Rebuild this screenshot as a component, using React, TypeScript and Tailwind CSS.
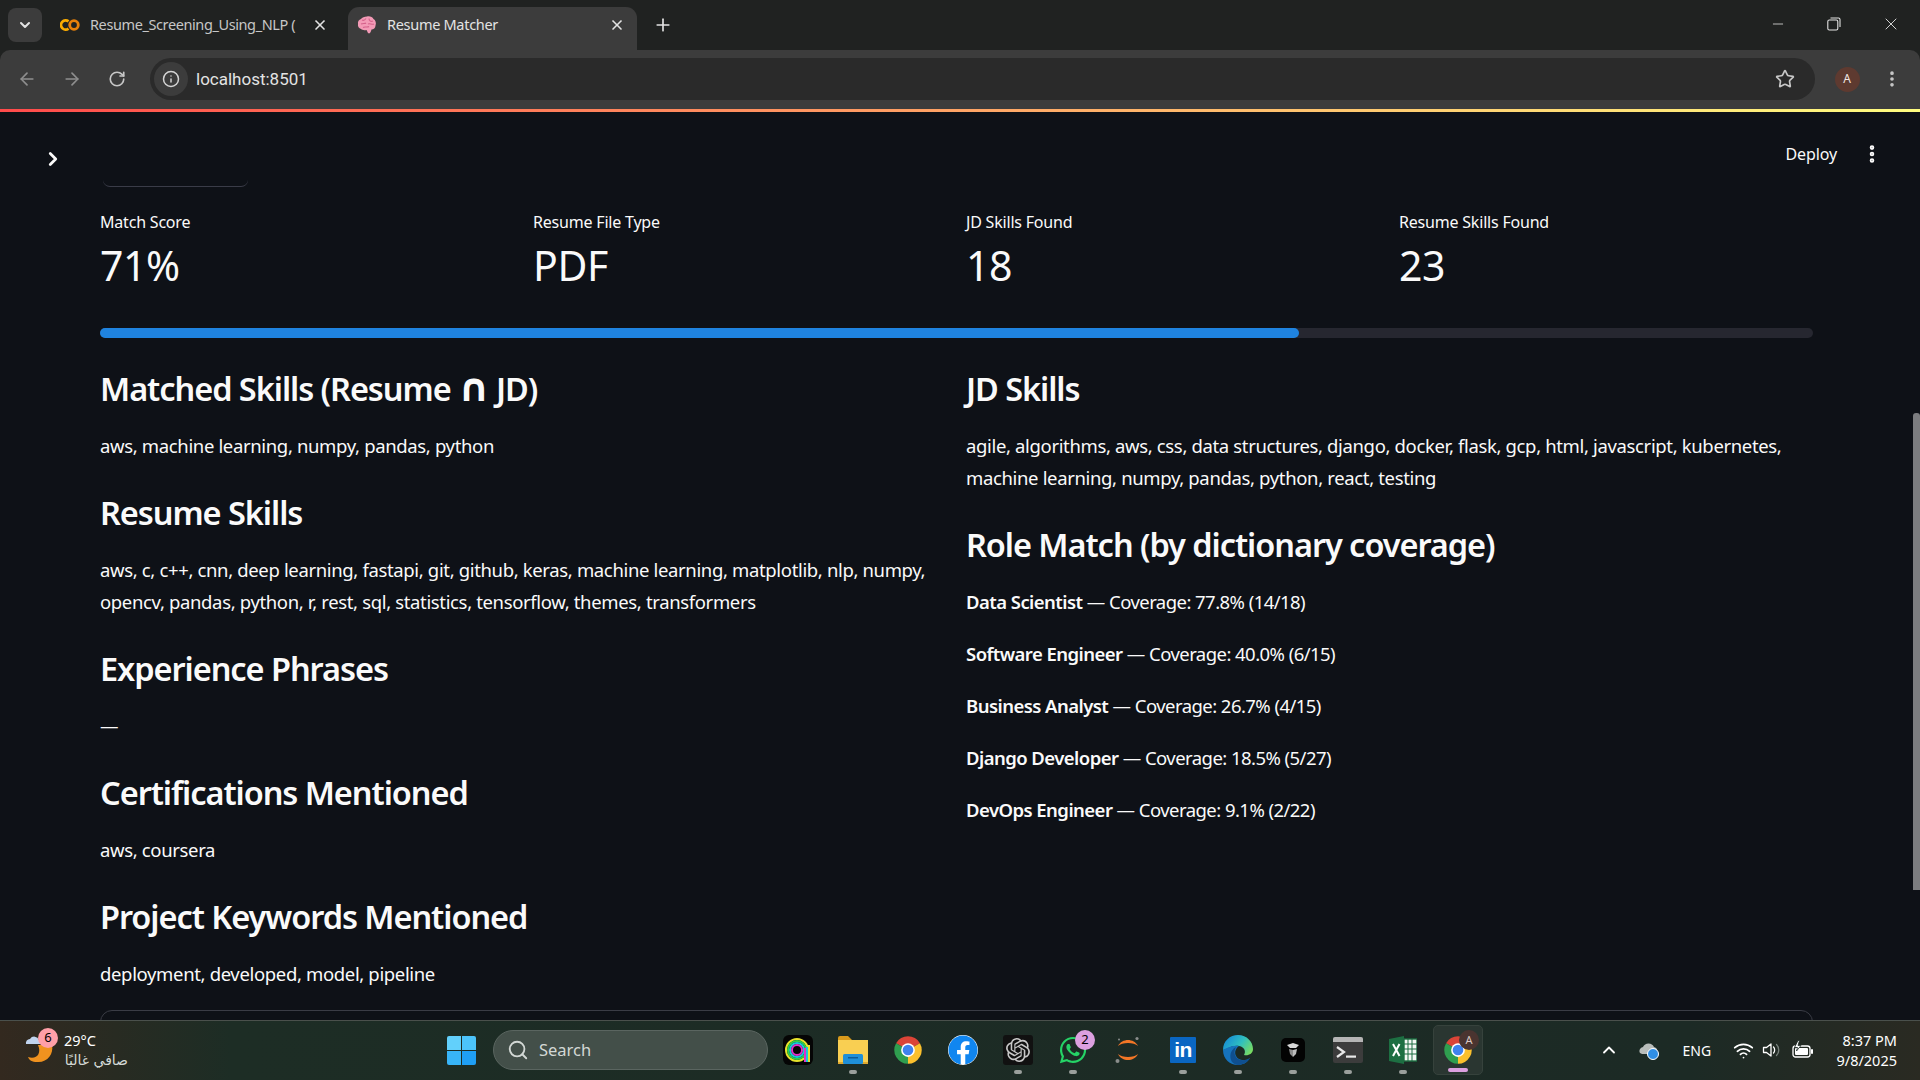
import React from 'react';
import { ArrowLeft, ArrowRight, ChevronDown, ChevronRight, ChevronUp, EllipsisVertical, Info, Minus, Plus, RotateCw, Search, Star, Wifi, X } from 'lucide-react';
import { FaFacebook, FaWhatsapp } from 'react-icons/fa';
import { SiOpenai } from 'react-icons/si';

const ROLES = [
  ['Data Scientist', 'Coverage: 77.8% (14/18)'],
  ['Software Engineer', 'Coverage: 40.0% (6/15)'],
  ['Business Analyst', 'Coverage: 26.7% (4/15)'],
  ['Django Developer', 'Coverage: 18.5% (5/27)'],
  ['DevOps Engineer', 'Coverage: 9.1% (2/22)'],
];

const METRICS = [
  ['Match Score', '71%'],
  ['Resume File Type', 'PDF'],
  ['JD Skills Found', '18'],
  ['Resume Skills Found', '23'],
];

const ChromeLogo = ({ size = 30 }: { size?: number }) => (
  <svg width={size} height={size} viewBox="0 0 48 48">
    <path d="M24 24 L4.95 13 A22 22 0 0 1 43.05 13 Z" fill="#db4437" />
    <path d="M24 24 L43.05 13 A22 22 0 0 1 24 46 Z" fill="#fbc02d" />
    <path d="M24 24 L24 46 A22 22 0 0 1 4.95 13 Z" fill="#2f9e4f" />
    <circle cx="24" cy="24" r="11" fill="#fff" />
    <circle cx="24" cy="24" r="8.5" fill="#3f82ee" />
  </svg>
);

const Folder = () => (
  <svg width="32" height="30" viewBox="0 0 32 30">
    <path d="M1 3 a2 2 0 0 1 2-2 h8 l4 4 h-14 z" fill="#d99a1c" />
    <rect x="1" y="5" width="30" height="24" fill="#f9cf52" />
    <rect x="1" y="27" width="30" height="2" fill="#e0a92e" />
    <rect x="6" y="19" width="20" height="10" rx="1.5" fill="#1f8fd8" />
    <rect x="11" y="22" width="10" height="1.5" fill="#0c5c99" />
  </svg>
);

const RingsLogo = () => (
  <svg width="30" height="30" viewBox="0 0 30 30">
    <rect width="30" height="30" rx="6" fill="#050505" />
    <circle cx="14" cy="15" r="11" fill="none" stroke="#e6e22c" strokeWidth="2" />
    <circle cx="14" cy="15" r="9" fill="none" stroke="#2fd24a" strokeWidth="2" />
    <circle cx="14" cy="15" r="7" fill="none" stroke="#18c9d6" strokeWidth="2" />
    <circle cx="14" cy="15" r="5" fill="none" stroke="#e12fc9" strokeWidth="2" />
    <rect x="21" y="13" width="2" height="14" fill="#e12fc9" />
    <rect x="23" y="12" width="2" height="15" fill="#18c9d6" />
    <rect x="25" y="10" width="2" height="17" fill="#e6e22c" />
  </svg>
);

const Jupyter = () => (
  <svg width="30" height="30" viewBox="0 0 30 30">
    <path d="M5 11 C9 3 21 3 25 11 C21 7 9 7 5 11 Z" fill="#f37626" />
    <path d="M5 19 C9 27 21 27 25 19 C21 23 9 23 5 19 Z" fill="#f37626" />
    <circle cx="24" cy="3.5" r="1.6" fill="#8a8d8c" />
    <circle cx="4.5" cy="26" r="2" fill="#8a8d8c" />
    <circle cx="6" cy="4.5" r="1" fill="#8a8d8c" />
  </svg>
);

const Edge = () => (
  <svg width="30" height="30" viewBox="0 0 30 30">
    <defs>
      <linearGradient id="edgeTop" x1="0" y1="0.2" x2="1" y2="0.7">
        <stop offset="0" stopColor="#1488d8" />
        <stop offset="0.55" stopColor="#2fbfc0" />
        <stop offset="1" stopColor="#78dc62" />
      </linearGradient>
    </defs>
    <path d="M0 15 C0 6 7 0 15 0 C24 0 30 7 30 14 C30 19 25 21 21 20 C23 17 22 12 16 11 C9 10 5 14 0 15 Z" fill="url(#edgeTop)" />
    <path d="M0 15 C5 12 11 10 16 11 C13 13 11 17 13 21 C15 25 21 27 27 23 C24 28 19 30 15 30 C7 30 0 24 0 15 Z" fill="#1673bd" />
    <path d="M9 27 C6 22 7 15 13 12 C11 16 11 19 13 22 C15 25 21 27 27 23 C24 28 19 30 15 30 C13 30 11 29 9 27 Z" fill="#0f4f8f" />
  </svg>
);

const CubeApp = () => (
  <svg width="24" height="24" viewBox="0 0 24 24">
    <rect width="24" height="24" rx="5" fill="#030303" />
    <path d="M6 7 L12 5 L18 7 L15 10 L9 10 Z" fill="#d8d8d8" />
    <path d="M8 11 L12 12 L12 19 L9 16 Z" fill="#8c8c8c" />
    <path d="M16 11 L12 12 L12 19 L15 16 Z" fill="#bcbcbc" />
  </svg>
);

const Terminal = () => (
  <svg width="30" height="26" viewBox="0 0 30 26">
    <rect width="30" height="26" rx="2" fill="#3c3c3c" />
    <path d="M2 0 h26 a2 2 0 0 1 2 2 v3 h-30 v-3 a2 2 0 0 1 2-2 z" fill="#b5b5b5" />
    <path d="M4 10 L11 15 L4 20" fill="none" stroke="#e8e8e8" strokeWidth="2.2" />
    <rect x="13" y="18.5" width="10" height="2.2" fill="#e8e8e8" />
  </svg>
);

const Excel = () => (
  <svg width="28" height="28" viewBox="0 0 28 28">
    <path d="M0 3 L15 0 V28 L0 25 Z" fill="#1d6f42" />
    <rect x="15" y="3" width="13" height="22" fill="#f4f8f4" stroke="#1d6f42" strokeWidth="1.4" />
    <path d="M19 3 V25 M23 3 V25 M15 8 H28 M15 13 H28 M15 18 H28" stroke="#1d6f42" strokeWidth="1" />
    <path d="M4 8 L10.5 20 M10.5 8 L4 20" stroke="#fff" strokeWidth="2" />
  </svg>
);

const ColabLogo = () => (
  <svg width="20" height="14" viewBox="0 0 20 14">
    <path d="M8.5 3.4 A4.6 4.6 0 1 0 8.5 10.6" fill="none" stroke="#f9ab00" strokeWidth="2.8" />
    <circle cx="14" cy="7" r="4.3" fill="none" stroke="#e8810a" strokeWidth="2.8" />
  </svg>
);

const BrainIcon = () => (
  <svg width="20" height="20" viewBox="0 0 20 20">
    <path d="M10 1.5 C13 1 15.5 2 16.5 4 C18.5 5 19.5 8 18.5 10.5 C18.5 13 16.5 14.5 14.5 14.5 C14 16 13.5 18.5 12 18.5 C10.5 18.5 10.5 16 9.5 15 C7 15.5 5 15 4 14 C2 13.5 0.5 11.5 1 9 C0.5 6.5 2 4.5 4 4 C5 2.5 7.5 1.5 10 1.5 Z" fill="#f39ab6" />
    <path d="M5 5 C7 6 8 5 9 3.5 M4 9 C6 8 8 9 9 8 M12 3.5 C12 6 14 7 16 6 M11 9 C13 8 15 10 17 9 M6 12.5 C8 11 10 13 12 11.5" fill="none" stroke="#d4618a" strokeWidth="1.1" />
  </svg>
);

const VolumeIcon = () => (
  <svg width="20" height="20" viewBox="0 0 20 20" fill="none" strokeWidth="1.3" strokeLinejoin="round" strokeLinecap="round">
    <path d="M1.5 7.5 H4.5 L9 4 V16 L4.5 12.5 H1.5 Z" stroke="#fff" />
    <path d="M11.5 7 C13 8.5 13 11.5 11.5 13" stroke="#fff" />
    <path d="M14.5 4.5 C17.5 7.5 17.5 12.5 14.5 15.5" stroke="#77807b" />
  </svg>
);

const BatteryIcon = () => (
  <svg width="22" height="20" viewBox="0 0 22 20">
    <rect x="1" y="6" width="17" height="11" rx="2.5" fill="none" stroke="#fff" strokeWidth="1.3" />
    <rect x="3" y="8" width="13" height="7" rx="1" fill="#fff" />
    <rect x="19" y="9" width="2" height="5" rx="1" fill="#fff" />
    <path d="M6 0.5 L2.5 7.5 H5.5 L4.5 11 L9 5.5 H6 L7.5 0.5 Z" fill="#fff" stroke="#1c2a25" strokeWidth="0.8" />
  </svg>
);

const Dot = ({ active }: { active?: boolean }) =>
  active ? <span className="block h-[4px] w-[20px] rounded-full bg-[#dca0e0]" /> : <span className="block h-[4px] w-[8px] rounded-full bg-[#9a9f9c]" />;

const TaskIcon = ({ dot, children }: { dot?: boolean; children: React.ReactNode }) => (
  <div className="flex h-[59px] w-[55px] flex-col items-center">
    <div className="flex h-[48px] w-full items-center justify-center pt-[10px]">{children}</div>
    <div className="pt-[1px]">{dot && <Dot />}</div>
  </div>
);

const Section = ({ title, children }: { title: React.ReactNode; children: React.ReactNode }) => (
  <section className="mb-[30px]">
    <h3 className="mb-[20px] whitespace-nowrap text-[32.5px] font-semibold leading-[42px] tracking-[-1.05px]">{title}</h3>
    <p className="whitespace-nowrap text-[18.5px] leading-[32px] tracking-[-0.35px]">{children}</p>
  </section>
);

const TabStrip = () => (
  <div className="flex h-[50px] bg-[#202221] pl-[8px] text-[#e3e3e3]">
    <div className="mt-[8px] flex h-[34px] w-[34px] items-center justify-center rounded-lg bg-[#3c3c3c]">
      <ChevronDown size={16} strokeWidth={3} />
    </div>
    <div className="flex w-[306px] items-center pb-[1px] pl-[18px] text-[14.5px] tracking-[-0.4px] text-[#c7c7c7]">
      <ColabLogo />
      <span className="ml-[10px] w-[209px] whitespace-nowrap">Resume_Screening_Using_NLP (</span>
      <X size={16} strokeWidth={2.5} className="ml-[13px] text-[#e3e3e3]" />
    </div>
    <div className="mt-[7px] flex h-[43px] w-[289px] items-center rounded-t-[11px] bg-[#3c3c3c] pb-[7px] pl-[9px] text-[14.5px] tracking-[-0.3px]">
      <BrainIcon />
      <span className="ml-[10px] w-[222px] whitespace-nowrap">Resume Matcher</span>
      <X size={16} strokeWidth={2.5} />
    </div>
    <div className="flex w-[52px] items-center justify-center pb-[1px]">
      <Plus size={20} strokeWidth={2} />
    </div>
    <div className="ml-auto flex h-[48px] items-center">
      <div className="flex w-[56px] justify-center"><Minus size={16} strokeWidth={1.2} /></div>
      <div className="flex w-[56px] justify-center">
        <svg width="14" height="14" viewBox="0 0 14 14" fill="none" stroke="#e3e3e3" strokeWidth="1.1">
          <rect x="0.8" y="3" width="10" height="10" rx="1.5" />
          <path d="M3.5 1 H11.5 a1.5 1.5 0 0 1 1.5 1.5 V10" />
        </svg>
      </div>
      <div className="flex w-[58px] justify-center"><X size={20} strokeWidth={1.1} /></div>
    </div>
  </div>
);

const Toolbar = () => (
  <div className="bg-[#202221]">
    <div className="flex h-[59px] items-center rounded-t-[10px] bg-[#3c3c3c] pb-[1px] pl-[4.5px]">
      <div className="flex w-[45px] justify-center text-[#8e8e8e]"><ArrowLeft size={20} /></div>
      <div className="flex w-[45px] justify-center text-[#8e8e8e]"><ArrowRight size={20} /></div>
      <div className="flex w-[45px] justify-center text-[#c7c7c7]"><RotateCw size={18} strokeWidth={2.2} /></div>
      <div className="ml-[10.5px] flex h-[42px] w-[1665px] items-center rounded-full bg-[#2a2a2a] pl-[4px] pr-[20px]">
        <div className="flex h-[34px] w-[34px] items-center justify-center rounded-full bg-[#3c3c3c] text-[#d5d5d5]"><Info size={18} /></div>
        <span className="ml-[8px] pt-[1px] text-[17px] text-[#e3e3e3] [font-family:Roboto,sans-serif]">localhost:8501</span>
        <Star size={20} strokeWidth={2} className="ml-auto text-[#c7c7c7]" />
      </div>
      <div className="ml-[19.5px] flex h-[25px] w-[25px] items-center justify-center rounded-full bg-[#5e3a30] text-[12px] text-[#f2e6e2]">A</div>
      <EllipsisVertical size={20} strokeWidth={2.4} className="ml-[22px] text-[#c7c7c7]" />
    </div>
    <div className="h-[3px] bg-[linear-gradient(90deg,#ff4b4b,#fffd80)]" />
  </div>
);

const Taskbar = () => (
  <div className="flex h-[60px] shrink-0 border-t border-[#4a504c] bg-[linear-gradient(90deg,#33291f_0%,#1d2d25_12%,#1c2a25_88%,#2a2a22_100%)] text-white [font-family:'Noto_Sans',sans-serif]">
    <div className="relative w-[64px] shrink-0">
      <svg width="34" height="34" viewBox="0 0 34 34" className="absolute left-[22px] top-[11px]">
        <path d="M16 13 C20 13 30 13 30 13 C32 22 25 31 15 30 C10 30 7 28 6 25 C14 28 20 22 16 13 Z" fill="#f0921f" />
        <path d="M4 12 a4 4 0 0 1 4-5 a5 5 0 0 1 9 1 a3 3 0 0 1 2 4 z" fill="#c0d4ee" />
      </svg>
      <span className="absolute left-[38px] top-[7px] flex h-[20px] w-[20px] items-center justify-center rounded-full bg-[#ff9fa8] text-[13px] text-black">6</span>
    </div>
    <div className="flex w-[383px] shrink-0 flex-col pt-[9px] text-[14.5px] leading-[20px]">
      <span>29°C</span>
      <span className="w-[64px] whitespace-nowrap text-[14px] text-[#d5dad7] [font-family:'DejaVu_Sans',sans-serif]" dir="rtl">صافي غالبًا</span>
    </div>
    <div className="mt-[15px] grid h-[29px] w-[29px] shrink-0 grid-cols-2 gap-[1px]">
      <span className="rounded-tl-[2px] bg-[#62d0fb]" />
      <span className="rounded-tr-[2px] bg-[#4cc4fb]" />
      <span className="rounded-bl-[2px] bg-[#38b5f8]" />
      <span className="rounded-br-[2px] bg-[#1f9ff5]" />
    </div>
    <div className="ml-[17px] mt-[9px] flex h-[40px] w-[275px] shrink-0 items-center rounded-full border border-[#5a6560] bg-[#434f49] pl-[13px] text-[16.5px] text-[#d3d8d5]">
      <Search size={22} strokeWidth={2} />
      <span className="ml-[10px]">Search</span>
    </div>
    <div className="ml-[2.5px] flex shrink-0">
      <TaskIcon><RingsLogo /></TaskIcon>
      <TaskIcon dot><Folder /></TaskIcon>
      <TaskIcon><ChromeLogo /></TaskIcon>
      <TaskIcon><FaFacebook size={30} className="rounded-full bg-white text-[#1086f0]" /></TaskIcon>
      <TaskIcon dot>
        <div className="flex h-[30px] w-[30px] items-center justify-center rounded-[3px] bg-[#111] text-[#c8c8c8]"><SiOpenai size={24} /></div>
      </TaskIcon>
      <TaskIcon dot>
        <div className="relative">
          <FaWhatsapp size={30} className="text-[#25d366]" />
          <span className="absolute right-[-7px] top-[-5px] flex h-[20px] w-[20px] items-center justify-center rounded-full bg-[#dca0e0] text-[13px] text-black">2</span>
        </div>
      </TaskIcon>
      <TaskIcon><Jupyter /></TaskIcon>
      <TaskIcon dot>
        <div className="flex h-[26px] w-[26px] items-center justify-center rounded-[1px] bg-[#0a66c2] pb-[1px] text-[21px] font-bold leading-none tracking-[-0.5px] text-white [font-family:'Liberation_Sans',sans-serif]">in</div>
      </TaskIcon>
      <TaskIcon dot><Edge /></TaskIcon>
      <TaskIcon dot><CubeApp /></TaskIcon>
      <TaskIcon dot><Terminal /></TaskIcon>
      <TaskIcon dot><Excel /></TaskIcon>
      <div className="ml-[2.5px] mt-[4px] flex h-[50px] w-[50px] flex-col items-center rounded-[5px] border border-[#36423c] bg-[#2a3631]">
        <div className="relative mt-[9px]">
          <ChromeLogo />
          <span className="absolute right-[-6px] top-[-5px] flex h-[20px] w-[20px] items-center justify-center rounded-full bg-[#4a3430] text-[11px] text-[#d8c8c4]">A</span>
        </div>
        <div className="mt-[3px]"><Dot active /></div>
      </div>
    </div>
    <div className="ml-[116px] flex shrink-0 items-center pb-[1px]">
      <ChevronUp size={20} strokeWidth={2.2} />
      <svg width="22" height="20" viewBox="0 0 22 20" className="ml-[18.5px]">
        <path d="M2 13 a4 4 0 0 1 3-6 a6 6 0 0 1 11 0 a4 4 0 0 1 2 7 h-14 z" fill="#b9bdbb" />
        <circle cx="15" cy="14" r="5.5" fill="#2f8fe6" stroke="#fff" strokeWidth="1" />
      </svg>
      <span className="ml-[23px] w-[29px] whitespace-nowrap text-[14px]">ENG</span>
      <Wifi size={21} strokeWidth={2} className="ml-[21px]" />
      <div className="ml-[8.5px]"><VolumeIcon /></div>
      <div className="ml-[10px]"><BatteryIcon /></div>
    </div>
    <div className="ml-auto flex flex-col items-end pr-[23px] pt-[9px] text-[14.5px] leading-[20px]">
      <span>8:37 PM</span>
      <span>9/8/2025</span>
    </div>
  </div>
);

const Main = () => (
  <main className="relative min-h-0 flex-1 overflow-hidden bg-[#0e1117] pl-[100px] pr-[107px] text-[#fafafa] [font-family:'Noto_Sans',sans-serif]">
    <header className="absolute inset-x-0 top-0 flex h-[74px] items-start">
      <ChevronRight size={22} strokeWidth={3} className="ml-[42px] mt-[36px]" />
      <span className="ml-auto mt-[29px] text-[16px] leading-[26px] tracking-[-0.1px]">Deploy</span>
      <EllipsisVertical size={22} strokeWidth={3} className="ml-[24px] mr-[37px] mt-[31px]" />
    </header>

    <div className="ml-[3px] mt-[68px] h-[7px] w-[145px] rounded-b-lg border-b border-[#3a3c48]" />

    <div className="mt-[23px] grid grid-cols-4 gap-x-[19px]">
      {METRICS.map(([label, value]) => (
        <div key={label}>
          <div className="text-[16px] leading-[24px] tracking-[-0.2px]">{label}</div>
          <div className="mt-[1px] text-[41px] leading-[60px] tracking-[-0.4px]">{value}</div>
        </div>
      ))}
    </div>

    <div className="mt-[33px] h-[10px] rounded-full bg-[#262730]">
      <div className="h-full w-[70%] rounded-full bg-[#1f83df]" />
    </div>

    <div className="mt-[30px] grid grid-cols-2 gap-x-[19px]">
      <div>
        <Section title={<>Matched Skills (Resume <span className="text-[39px] font-bold leading-none [font-family:'DejaVu_Sans',sans-serif]">∩</span> JD)</>}>
          aws, machine learning, numpy, pandas, python
        </Section>
        <Section title="Resume Skills">
          aws, c, c++, cnn, deep learning, fastapi, git, github, keras, machine learning, matplotlib, nlp, numpy,
          <br />
          opencv, pandas, python, r, rest, sql, statistics, tensorflow, themes, transformers
        </Section>
        <Section title="Experience Phrases">—</Section>
        <Section title="Certifications Mentioned">aws, coursera</Section>
        <Section title="Project Keywords Mentioned">deployment, developed, model, pipeline</Section>
      </div>
      <div>
        <Section title="JD Skills">
          agile, algorithms, aws, css, data structures, django, docker, flask, gcp, html, javascript, kubernetes,
          <br />
          machine learning, numpy, pandas, python, react, testing
        </Section>
        <h3 className="mb-[20px] whitespace-nowrap text-[32.5px] font-semibold leading-[42px] tracking-[-1.05px]">Role Match (by dictionary coverage)</h3>
        {ROLES.map(([role, coverage]) => (
          <p key={role} className="mb-[20px] whitespace-nowrap text-[18.5px] leading-[32px] tracking-[-0.55px]">
            <strong className="font-semibold">{role}</strong> — {coverage}
          </p>
        ))}
      </div>
    </div>

    <div className="-mt-[10px] h-[40px] rounded-t-xl border border-[#3a3c45]" />

    <div className="absolute right-0 top-[301px] h-[477px] w-[7px] rounded-t-[3px] bg-[#7c7d80]" />
  </main>
);

export default function App() {
  return (
    <div className="flex h-screen w-[1920px] flex-col overflow-hidden bg-[#0e1117] [font-family:'Noto_Sans',sans-serif]">
      <TabStrip />
      <Toolbar />
      <Main />
      <Taskbar />
    </div>
  );
}
